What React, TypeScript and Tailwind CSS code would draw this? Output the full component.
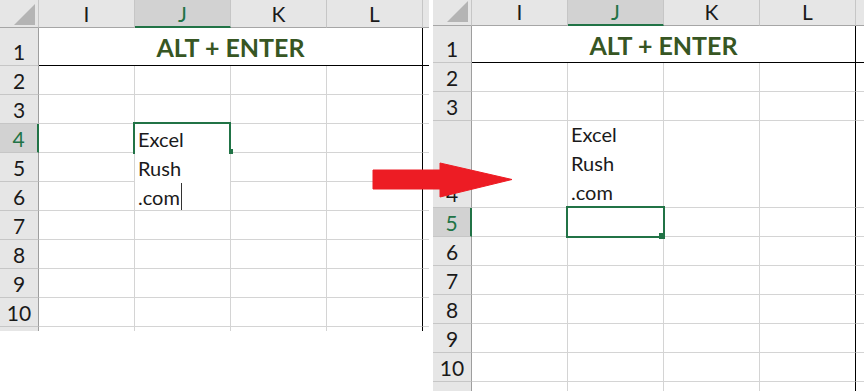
import type { ReactNode } from "react";

type Row = { n: string; h: string };

type SheetProps = {
  width: string;
  headerH: string;
  cornerPad: string;
  headPad: string;
  headSelPad: string;
  titlePad: string;
  mW: string;
  stubH: string;
  rows: Row[];
  selRow: string;
  jCell: (n: string) => ReactNode;
};

const cols = ["I", "J", "K", "L"];

function Sheet({ width, headerH, cornerPad, headPad, headSelPad, titlePad, mW, stubH, rows, selRow, jCell }: SheetProps) {
  return (
    <div className={`${width} shrink-0 flex flex-col self-start`}>
      {/* column headers */}
      <div className={`flex ${headerH}`}>
        <div className={`w-[39px] shrink-0 bg-[#e6e6e6] border-r border-b border-r-[#c6c6c6] border-b-[#a6a6a6] flex items-end justify-end ${cornerPad}`}>
          <svg width="21" height="21" viewBox="0 0 21 21">
            <polygon points="0,21 21,21 21,0" fill="#b4b4b4" />
          </svg>
        </div>
        {cols.map((c) =>
          c === "J" ? (
            <div
              key={c}
              className={`w-[96px] shrink-0 bg-[#d2d2d2] border-r border-r-[#c6c6c6] border-b-2 border-b-[#217346] flex items-end justify-center text-[21px] leading-[22px] text-[#217346] ${headSelPad}`}
            >
              {c}
            </div>
          ) : (
            <div
              key={c}
              className={`w-[96px] shrink-0 bg-[#e6e6e6] border-r border-r-[#c6c6c6] border-b border-b-[#a6a6a6] flex items-end justify-center text-[21px] leading-[22px] ${headPad}`}
            >
              {c}
            </div>
          )
        )}
        <div className={`${mW} shrink-0 bg-[#e6e6e6] border-b border-b-[#a6a6a6]`} />
      </div>

      {rows.map((r) => (
        <div key={r.n} className={`flex ${r.h}`}>
          {r.n === selRow ? (
            <div className="w-[39px] shrink-0 bg-[#d2d2d2] border-r-2 border-r-[#217346] border-b border-b-[#c6c6c6] flex items-end justify-center pb-[3px] text-[21px] leading-none text-[#217346]">
              {r.n}
            </div>
          ) : (
            <div className="w-[39px] shrink-0 bg-[#e6e6e6] border-r border-r-[#9e9e9e] border-b border-b-[#c6c6c6] flex items-end justify-center pb-[3px] text-[21px] leading-none">
              {r.n}
            </div>
          )}
          {r.n === "1" ? (
            <>
              <div className={`w-[384px] shrink-0 border-r border-b border-black flex items-end justify-center ${titlePad} text-[25px] font-bold leading-none text-[#375623]`}>
                ALT + ENTER
              </div>
              <div className={`${mW} shrink-0 border-b border-black`} />
            </>
          ) : (
            <>
              <div className="w-[96px] shrink-0 border-r border-b border-[#d4d4d4]" />
              <div className="relative w-[96px] shrink-0 border-r border-b border-[#d4d4d4]">{jCell(r.n)}</div>
              <div className="w-[96px] shrink-0 border-r border-b border-[#d4d4d4]" />
              <div className="w-[96px] shrink-0 border-r border-r-black border-b border-b-[#d4d4d4]" />
              <div className={`${mW} shrink-0 border-b border-[#d4d4d4]`} />
            </>
          )}
        </div>
      ))}

      {/* partly visible next row */}
      <div className={`flex ${stubH}`}>
        <div className="w-[39px] shrink-0 bg-[#e6e6e6] border-r border-r-[#9e9e9e]" />
        <div className="w-[96px] shrink-0 border-r border-[#d4d4d4]" />
        <div className="w-[96px] shrink-0 border-r border-[#d4d4d4]" />
        <div className="w-[96px] shrink-0 border-r border-[#d4d4d4]" />
        <div className="w-[96px] shrink-0 border-r border-black" />
      </div>
    </div>
  );
}

const leftRows: Row[] = [
  { n: "1", h: "h-[38px]" },
  { n: "2", h: "h-[29px]" },
  { n: "3", h: "h-[29px]" },
  { n: "4", h: "h-[29px]" },
  { n: "5", h: "h-[29px]" },
  { n: "6", h: "h-[29px]" },
  { n: "7", h: "h-[29px]" },
  { n: "8", h: "h-[29px]" },
  { n: "9", h: "h-[29px]" },
  { n: "10", h: "h-[29px]" },
];

const rightRows: Row[] = [
  { n: "1", h: "h-[37px]" },
  { n: "2", h: "h-[29px]" },
  { n: "3", h: "h-[29px]" },
  { n: "4", h: "h-[87px]" },
  { n: "5", h: "h-[29px]" },
  { n: "6", h: "h-[29px]" },
  { n: "7", h: "h-[29px]" },
  { n: "8", h: "h-[29px]" },
  { n: "9", h: "h-[29px]" },
  { n: "10", h: "h-[29px]" },
];

function leftJ(n: string) {
  if (n !== "4") return null;
  return (
    <>
      {/* in-cell editor spilling over J5:J6 */}
      <div className="absolute top-0 left-0 w-[95px] h-[86px] bg-white z-10 pl-[3px] pt-px text-[20px] leading-[29px]">
        <div>Excel</div>
        <div>Rush</div>
        <div>
          .com
          <span className="inline-block ml-px w-px h-[27px] bg-[#333] align-[-5px]" />
        </div>
      </div>
      <div className="absolute -top-[2px] -left-[2px] w-[98px] h-[32px] border-t-2 border-l-2 border-r-2 border-[#217346] z-20" />
      <div className="absolute top-[25px] left-[94px] w-[4px] h-[5px] bg-[#217346] z-20" />
    </>
  );
}

function rightJ(n: string) {
  if (n === "4") {
    return (
      <div className="-mt-px pl-[3px] text-[20px] leading-[29px]">
        <div>Excel</div>
        <div>Rush</div>
        <div>.com</div>
      </div>
    );
  }
  if (n === "5") {
    return (
      <>
        <div className="absolute -top-[2px] -left-[2px] w-[99px] h-[32px] border-2 border-[#217346] z-20" />
        <div className="absolute top-[25px] left-[91px] w-[6px] h-[6px] bg-[#217346] z-20" />
      </>
    );
  }
  return null;
}

export default function App() {
  return (
    <div className="relative w-[864px] h-[391px] overflow-hidden bg-white flex gap-[5px] font-[Lato,sans-serif] text-[#1a1a1a]">
      <Sheet
        width="w-[428px]"
        headerH="h-[28px]"
        cornerPad="pr-[3px] pb-[2px]"
        headPad="pb-[2px]"
        headSelPad="pb-[1px]"
        titlePad="pb-[5px]"
        mW="w-[6px]"
        stubH="h-[4px]"
        rows={leftRows}
        selRow="4"
        jCell={leftJ}
      />
      <Sheet
        width="w-[431px]"
        headerH="h-[26px]"
        cornerPad="pr-[3px] pb-[3px]"
        headPad="pb-[2px]"
        headSelPad="pb-[1px]"
        titlePad="pb-[4px]"
        mW="w-[9px]"
        stubH="h-[10px]"
        rows={rightRows}
        selRow="5"
        jCell={rightJ}
      />

      {/* red arrow */}
      <svg className="absolute left-[372px] top-[162px] z-30" width="141" height="36" viewBox="0 0 141 36">
        <polygon
          points="1,8 68,8 68,1 140,17.5 68,35 68,27 1,27"
          fill="#ed1c24"
          stroke="#ed1c24"
          strokeWidth="1"
          strokeLinejoin="round"
        />
      </svg>
    </div>
  );
}
